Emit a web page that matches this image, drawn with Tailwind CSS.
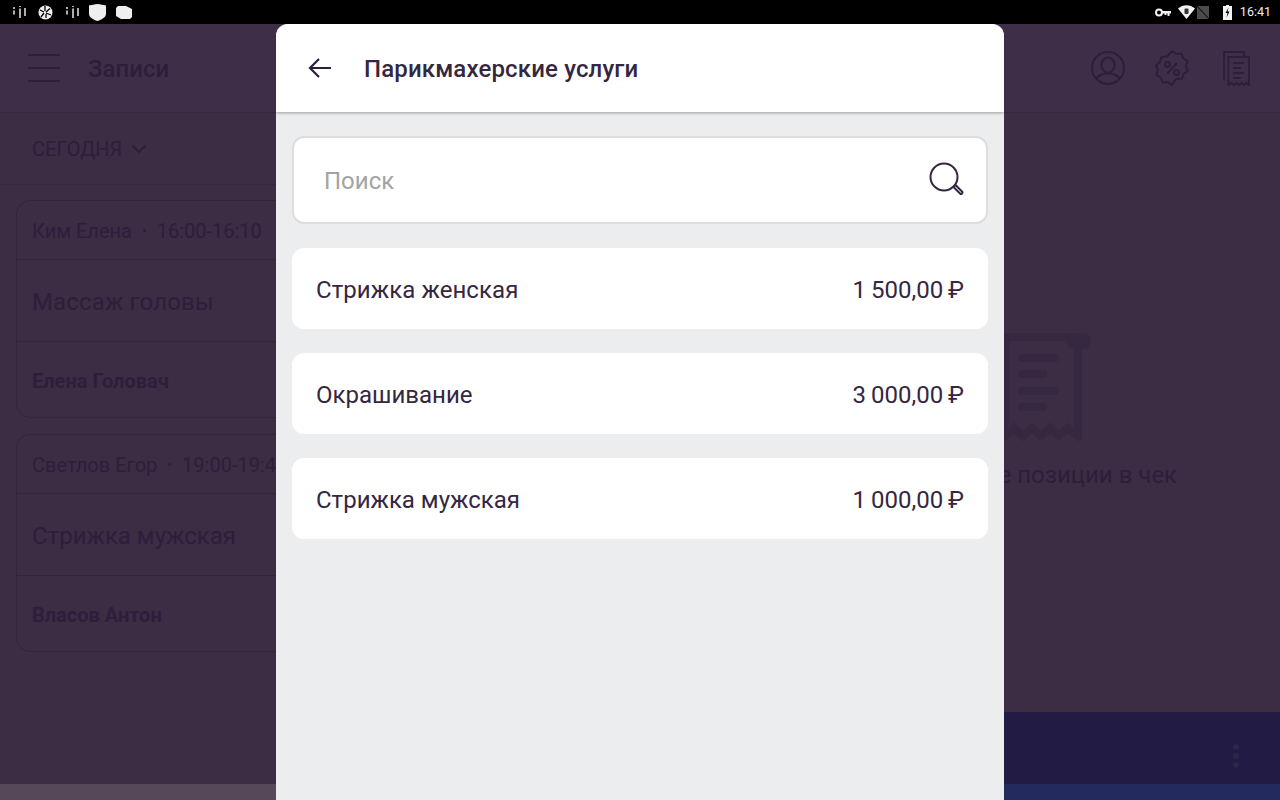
<!DOCTYPE html>
<html lang="ru">
<head>
    <meta charset="UTF-8">
    <meta name="viewport" content="width=device-width, initial-scale=1.0">
    <title>Записи</title>
    <script src="https://cdn.jsdelivr.net/npm/@tailwindcss/browser@4"></script>
</head>
<body class="relative w-[1280px] h-[800px] overflow-hidden bg-[#3c2c44] font-['Roboto',sans-serif] text-[#2e1e3c]">
    <!-- Status bar -->
    <div class="h-6 bg-black flex items-center justify-between pl-[13px] pr-[9px] text-white">
        <div class="flex items-center">
            <svg class="w-[13px] h-[12px]" viewBox="0 0 13 12" fill="none" stroke="#e8e8e8" stroke-width="1.500">
                <path d="M1 1v2M1 4.500v4M7 0v1M7 2.500v9.500M12 2v8"/>
            </svg>
            <svg class="w-[15px] h-[15px] ml-[12px]" viewBox="0 0 15 15">
                <circle cx="7.5" cy="7.5" r="7" fill="#efefef"/>
                <path d="M7 1v5M12 3.500 8 7M13 10 8 8M8 13V9M3 12l3-4M2 5l4 2" stroke="#000" stroke-width="1.300"/>
            </svg>
            <svg class="w-[13px] h-[12px] ml-[13px]" viewBox="0 0 13 12" fill="none" stroke="#e8e8e8" stroke-width="1.500">
                <path d="M1 1v2M1 4.500v4M7 0v1M7 2.500v9.500M12 2v8"/>
            </svg>
            <svg class="w-[17px] h-[17px] ml-[10px]" viewBox="0 0 17 17">
                <path d="M0 1.500C3 .8 5.500.500 8.500 0 11.500.500 14 .8 17 1.500V10c0 3-4 5.500-8.500 7C4 15.500 0 13 0 10z" fill="#efefef"/>
            </svg>
            <svg class="w-[16px] h-[13px] ml-[10px]" viewBox="0 0 16 13">
                <path d="M2 0h8l6 3v8l-2 2H5L0 10V2z" fill="#efefef"/>
            </svg>
        </div>
        <div class="flex items-center">
            <svg class="w-4 h-[9px]" viewBox="0 0 16 9">
                <circle cx="4" cy="4.500" r="3" fill="none" stroke="#f2f2f2" stroke-width="2"/>
                <path d="M7 3h9v2.500h-1.500V8h-2V5.500h-1V7H9.500V5.500H7z" fill="#f2f2f2"/>
            </svg>
            <svg class="w-[17px] h-[14px] ml-[7px]" viewBox="0 0 17 14">
                <path d="M0 3.500C5-1 12-1 17 3.500L8.500 14z" fill="#f2f2f2"/>
                <rect x="6.500" y="3.500" width="4" height="5.500" rx="1" fill="#333"/>
            </svg>
            <svg class="w-3 h-[13px] ml-[2px]" viewBox="0 0 12 13">
                <path d="M0 0h12v13H0z" fill="#4b4b4b"/>
                <path d="M0 0l12 13" stroke="#000" stroke-width="1"/>
            </svg>
            <svg class="w-[9px] h-[15px] ml-[14px]" viewBox="0 0 9 15">
                <path d="M3 0h3v1h3v14H0V1h3z" fill="#f2f2f2"/>
                <path d="M5.500 2.500 2.500 8h2L3.500 12.500 6.500 6.500h-2z" fill="#000"/>
            </svg>
            <span class="ml-[8px] text-[12.5px] leading-none text-[#eeeeee]">16:41</span>
        </div>
    </div>

    <!-- Header -->
    <div class="h-[89px] flex items-center border-b border-[#372840] bg-[#3f2e47]">
        <div class="ml-7 w-8 flex flex-col gap-[11px]">
            <div class="h-[2px] bg-[#2e1e3c]"></div>
            <div class="h-[2px] bg-[#2e1e3c]"></div>
            <div class="h-[2px] bg-[#2e1e3c]"></div>
        </div>
        <h1 class="ml-7 pt-[2px] text-[24px] font-medium">Записи</h1>
        <div class="ml-auto mr-[30px] flex items-center">
            <svg class="w-[34px] h-[34px]" viewBox="0 0 34 34" fill="none" stroke="#2e1e3c" stroke-width="2">
                <circle cx="17" cy="17" r="16"/>
                <ellipse cx="17" cy="14" rx="6.500" ry="7.500"/>
                <path d="M5.500 28c2-4.500 6-5.500 11.500-5.500S26.500 23.500 28.500 28"/>
            </svg>
            <svg class="w-[34px] h-[36px] ml-[30px]" viewBox="0 0 34 36" fill="none" stroke="#2e1e3c" stroke-width="2">
                <path d="M17 1l4.500 3 5-.5 1.500 4.500 4.500 3-1.500 5 1.500 5-4 3-1.500 5-5.500-.500L17 35l-4.500-3-5 .500L6 28l-4.500-3 1.500-5-2-4.500L5 12l1.500-5 5.500-.5z" stroke-linejoin="round"/>
                <path d="M12 24L22 13"/>
                <circle cx="12.500" cy="14.500" r="2.500"/>
                <circle cx="21.500" cy="22.500" r="2.500"/>
            </svg>
            <svg class="w-[27px] h-[35px] ml-[34px]" viewBox="0 0 27 35" fill="none" stroke="#2e1e3c" stroke-width="2">
                <path d="M1 29V1h20v4"/>
                <path d="M5.500 34V6H26v28l-2.500-2-2.500 2-2.500-2-2.500 2-2.500-2-2.500 2-2.500-2z"/>
                <path d="M10 12h11M10 17h8M10 22h11M10 27h8"/>
            </svg>
        </div>
    </div>

    <div class="flex">
        <!-- Records list -->
        <div class="w-[800px] shrink-0">
            <div class="h-[72px] border-b border-[#372840] flex items-center pl-8 text-[20px] text-[#2e1e3c]">
                <span>СЕГОДНЯ</span>
                <svg class="w-4 h-[10px] ml-[9px]" viewBox="0 0 16 10" fill="none" stroke="#2e1e3c" stroke-width="2">
                    <path d="M1.500 1.500 8 8l6.500-6.500"/>
                </svg>
            </div>
            <div class="px-4 pt-[15px] flex flex-col gap-[16px]">
                <div class="border border-[#342539] rounded-[14px] h-[218px] flex flex-col">
                    <div class="h-[59px] px-[15px] pt-[2px] flex items-center text-[20px] border-b border-[#342539]">
                        <span>Ким Елена</span><span class="mx-[10px] text-[14px]">•</span><span>16:00-16:10</span>
                    </div>
                    <div class="h-[82px] px-[15px] pt-[2px] flex items-center text-[24px] tracking-[0.15px] border-b border-[#342539]">Массаж головы</div>
                    <div class="flex-1 px-[15px] pt-[2px] flex items-center text-[20px] font-bold">Елена Головач</div>
                </div>
                <div class="border border-[#342539] rounded-[14px] h-[218px] flex flex-col">
                    <div class="h-[59px] px-[15px] pt-[2px] flex items-center text-[20px] border-b border-[#342539]">
                        <span>Светлов Егор</span><span class="mx-[10px] text-[14px]">•</span><span>19:00-19:45</span>
                    </div>
                    <div class="h-[82px] px-[15px] pt-[2px] flex items-center text-[24px] border-b border-[#342539]">Стрижка мужская</div>
                    <div class="flex-1 px-[15px] pt-[2px] flex items-center text-[20px] font-bold">Власов Антон</div>
                </div>
            </div>
        </div>
        <!-- Empty receipt -->
        <div class="flex-1 flex flex-col items-center pt-[220px] border-l border-[#372840]">
            <svg class="w-[104px] h-[108px]" viewBox="0 0 104 108" fill="none" stroke="#372842">
                <path d="M8 4h86" stroke-width="8" stroke-linecap="round"/>
                <path d="M86 8h8" stroke-width="16" stroke-linecap="round"/>
                <path d="M89 4v99l-10-8-9 8-9-8-9 8-9-8-9 8-9-8-9 8V6" stroke-width="8"/>
                <path d="M33 25h33M33 41h21M33 58h33M33 74h21" stroke-width="8" stroke-linecap="round"/>
            </svg>
            <p class="mt-[20px] text-[24px] leading-7 whitespace-nowrap">Добавьте позиции в чек</p>
        </div>
    </div>

    <!-- Bottom bars -->
    <div class="absolute left-0 right-0 bottom-4 h-[72px] flex justify-end items-center pt-4 pr-[41px] ml-[640px] bg-[#221b44]">
        <div class="flex flex-col gap-[3px]">
            <div class="w-[6px] h-[6px] rounded-full bg-[#2e2647]"></div>
            <div class="w-[6px] h-[6px] rounded-full bg-[#2e2647]"></div>
            <div class="w-[6px] h-[6px] rounded-full bg-[#2e2647]"></div>
        </div>
    </div>
    <div class="absolute left-0 right-0 bottom-0 h-4 flex">
        <div class="w-[640px] bg-[#564759]"></div>
        <div class="flex-1 bg-[#232a5e]"></div>
    </div>

    <!-- Services dialog -->
    <div class="absolute left-[276px] top-6 bottom-0 w-[728px] rounded-t-[12px] bg-[#ecedef] overflow-hidden flex flex-col">
        <div class="h-[88px] bg-white shadow-[0_1px_3px_rgba(0,0,0,0.35)] flex items-center shrink-0">
            <svg class="ml-[32px] w-6 h-6" viewBox="0 0 24 24" fill="none" stroke="#2e1e3c" stroke-width="2.200">
                <path d="M23 12H2M11 3l-9 9 9 9"/>
            </svg>
            <h2 class="ml-[32px] pt-[2px] text-[24px] font-medium tracking-[0.15px] text-[#35273f]">Парикмахерские услуги</h2>
        </div>
        <div class="p-4 pt-6 flex flex-col gap-6">
            <div class="h-[88px] bg-white border-2 border-[#dedee0] rounded-[12px] flex items-center justify-between pl-[30px] pr-[22px]">
                <span class="pt-[2px] text-[24px] text-[#a3a3a3]">Поиск</span>
                <svg class="w-[36px] h-[36px]" viewBox="0 0 36 36" fill="none" stroke="#35273f" stroke-width="2">
                    <circle cx="16" cy="15" r="13.500"/>
                    <path d="M25.500 25l2-2 6.500 6.500a1.400 1.400 0 0 1-2 2z" stroke-linejoin="round"/>
                </svg>
            </div>
            <div class="h-[81px] pt-[2px] bg-white rounded-[12px] flex items-center justify-between px-6 text-[24px] text-[#35273f]">
                <span class="tracking-[0.07px]">Стрижка женская</span><span class="[word-spacing:-1px]">1 500,00 ₽</span>
            </div>
            <div class="h-[81px] pt-[2px] bg-white rounded-[12px] flex items-center justify-between px-6 text-[24px] text-[#35273f]">
                <span>Окрашивание</span><span class="[word-spacing:-1px]">3 000,00 ₽</span>
            </div>
            <div class="h-[81px] pt-[2px] bg-white rounded-[12px] flex items-center justify-between px-6 text-[24px] text-[#35273f]">
                <span>Стрижка мужская</span><span class="[word-spacing:-1px]">1 000,00 ₽</span>
            </div>
        </div>
    </div>
</body>
</html>
